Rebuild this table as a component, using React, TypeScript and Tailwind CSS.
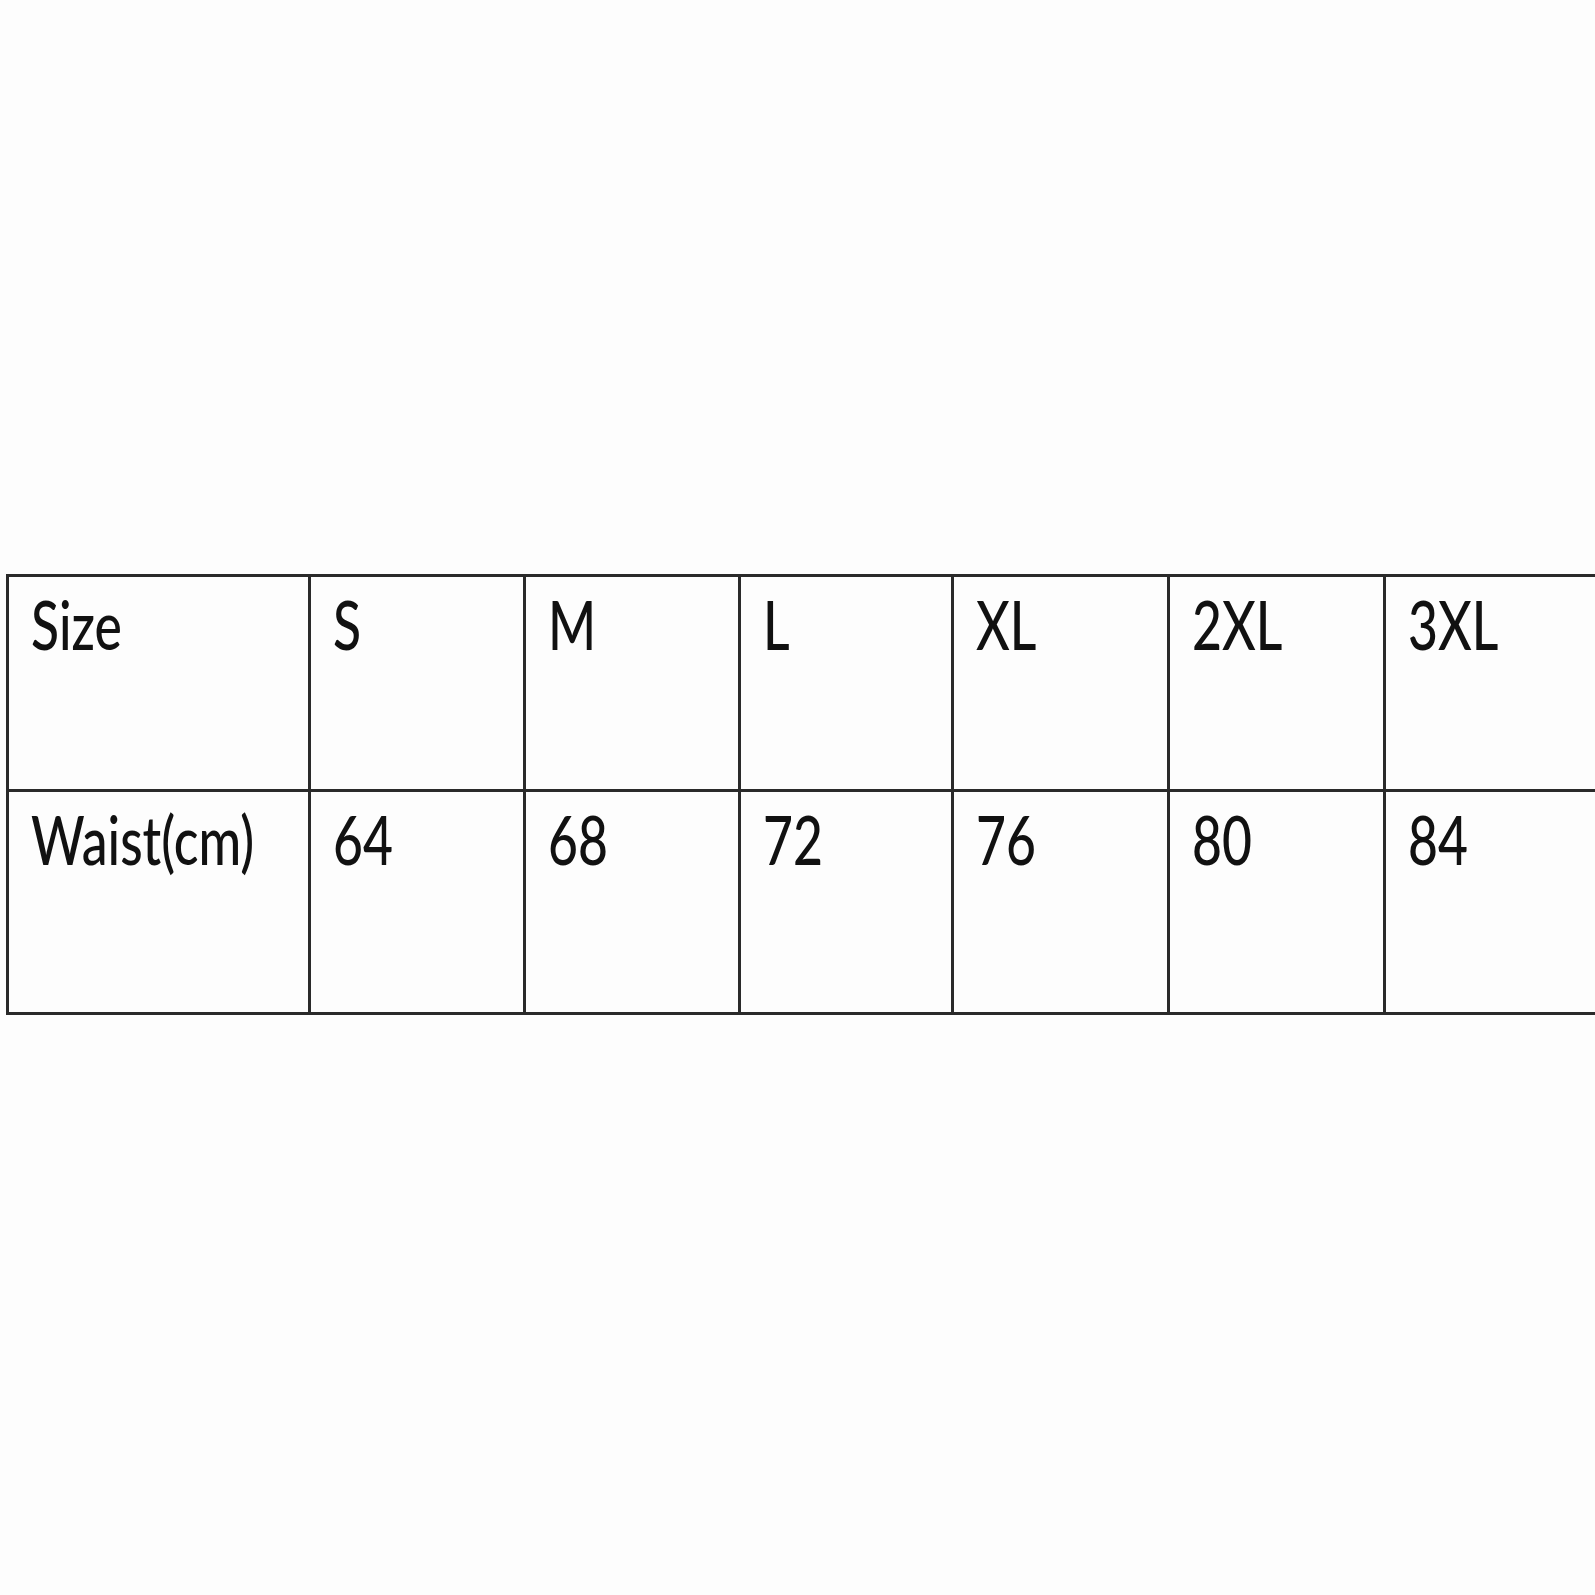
const sizes = ["S", "M", "L", "XL", "2XL", "3XL"];
const waist = ["64", "68", "72", "76", "80", "84"];

function Cell({ children, tall }: { children: React.ReactNode; tall?: boolean }) {
  return (
    <div
      className={`border-r-[3px] border-b-[3px] border-[#2a2a2a] pl-[22px] pt-[13px] ${
        tall ? "h-[223px]" : "h-[215px]"
      }`}
    >
      <span className="inline-block origin-left scale-x-[0.76] font-['Lato',sans-serif] text-[68px] font-medium leading-none text-[#111]">
        {children}
      </span>
    </div>
  );
}

export default function App() {
  return (
    <div className="h-[1595px] w-[1595px] overflow-hidden bg-[#fdfdfd] pt-[574px] pl-[6px]">
      <div className="grid w-max grid-cols-[302px_215px_215px_213px_216px_216px_216px] border-t-[3px] border-l-[3px] border-[#2a2a2a]">
        <Cell>Size</Cell>
        {sizes.map((s) => (
          <Cell key={s}>{s}</Cell>
        ))}
        <Cell tall>Waist(cm)</Cell>
        {waist.map((w) => (
          <Cell key={w} tall>
            {w}
          </Cell>
        ))}
      </div>
    </div>
  );
}
